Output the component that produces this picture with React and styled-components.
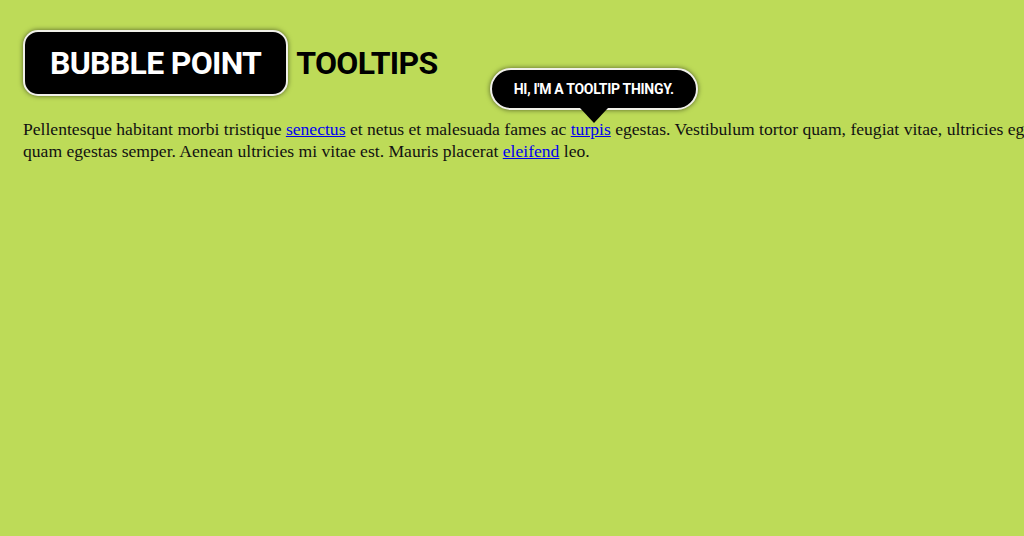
import React from 'react'
import styled, { createGlobalStyle } from 'styled-components'

const GlobalStyle = createGlobalStyle`
  html, body {
    margin: 0;
    padding: 0;
    background: #bddb58;
    overflow: hidden;
  }
  body {
    font-family: "Liberation Serif", "Times New Roman", serif;
    font-size: 17.6px;
    color: #111;
  }
`

const Page = styled.div`
  padding: 30px 23px;
`

const Title = styled.h1`
  display: flex;
  align-items: center;
  gap: 8px;
  margin: 0 0 22px;
  font-family: Roboto, "Liberation Sans", sans-serif;
  font-weight: 700;
  font-size: 32px;
  line-height: 1;
  letter-spacing: -0.7px;
  color: #000;
`

const Bubble = styled.span`
  display: inline-flex;
  align-items: center;
  height: 62px;
  padding: 0 25px;
  background: #000;
  color: #fff;
  border: 2px solid #f0f0e8;
  border-radius: 15px;
  box-shadow: 0 0 5px rgba(0, 0, 0, 0.55);
`

const Text = styled.p`
  margin: 0;
  white-space: nowrap;
  line-height: 22px;
`

const Link = styled.a`
  color: #0000ee;
  text-decoration: underline;
`

const TipAnchor = styled.span`
  position: relative;
`

const Tooltip = styled.span`
  position: absolute;
  left: calc(50% + 3px);
  bottom: 29px;
  transform: translateX(-50%);
  display: flex;
  align-items: center;
  justify-content: center;
  width: 204px;
  height: 38px;
  background: #000;
  color: #fff;
  border: 2px solid #f0f0e8;
  border-radius: 21px;
  box-shadow: 0 0 5px rgba(0, 0, 0, 0.55);
  font-family: Roboto, "Liberation Sans", sans-serif;
  font-weight: 700;
  font-size: 14px;
  letter-spacing: -0.3px;
  line-height: 1;

  &::after {
    content: '';
    position: absolute;
    left: 50%;
    top: 100%;
    margin-left: -14px;
    border-style: solid;
    border-width: 15px 14px 0;
    border-color: #000 transparent transparent;
  }
`

export default function App() {
  return (
    <Page>
      <GlobalStyle />
      <Title>
        <Bubble>BUBBLE POINT</Bubble>
        TOOLTIPS
      </Title>
      <Text>
        Pellentesque habitant morbi tristique <Link href="#">senectus</Link> et
        netus et malesuada fames ac{' '}
        <TipAnchor>
          <Link href="#">turpis</Link>
          <Tooltip>HI, I'M A TOOLTIP THINGY.</Tooltip>
        </TipAnchor>{' '}
        egestas. Vestibulum tortor quam, feugiat vitae, ultricies eget, tempor
        sit amet, ante. Donec eu libero sit amet
        <br />
        quam egestas semper. Aenean ultricies mi vitae est. Mauris placerat{' '}
        <Link href="#">eleifend</Link> leo.
      </Text>
    </Page>
  )
}
